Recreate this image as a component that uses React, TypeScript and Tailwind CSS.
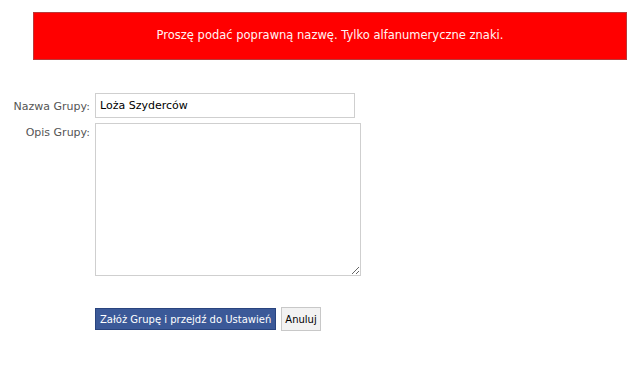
import React from "react";

export default function App() {
  const font = { fontFamily: '"DejaVu Sans", Verdana, sans-serif' };
  return (
    <div className="w-[640px] h-[370px] bg-white" style={font}>
      <div className="pt-[12px] pl-[33px]">
        <div className="w-[594px] h-[48px] bg-[#ff0000] border border-[#b83a3a] flex items-center justify-center">
          <span className="text-[#fff4f4] text-[11.5px]">
            Proszę podać poprawną nazwę. Tylko alfanumeryczne znaki.
          </span>
        </div>
      </div>
      <div className="mt-[33px] grid grid-cols-[90px_auto] gap-x-[5px] gap-y-[5px] items-start">
        <label className="text-[11px] text-[#555] text-right pt-[6px]">Nazwa Grupy:</label>
        <input
          defaultValue="Loża Szyderców"
          className="w-[260px] h-[25px] border border-[#cfcfcf] px-[4px] text-[11px] text-black outline-none"
          style={font}
        />
        <label className="text-[11px] text-[#555] text-right pt-[2px]">Opis Grupy:</label>
        <textarea
          className="w-[266px] h-[153px] border border-[#cfcfcf] text-[11px] outline-none"
          style={font}
        />
      </div>
      <div className="mt-[31px] ml-[95px] flex items-center gap-[5px]">
        <button className="h-[22px] px-[4px] bg-[#3b5998] border border-[#29447e] text-white text-[10px]" style={font}>
          Załóż Grupę i przejdź do Ustawień
        </button>
        <button className="h-[24px] px-[3px] bg-[#f2f2f2] border border-[#c8c8c8] text-black text-[10px]" style={font}>
          Anuluj
        </button>
      </div>
    </div>
  );
}
